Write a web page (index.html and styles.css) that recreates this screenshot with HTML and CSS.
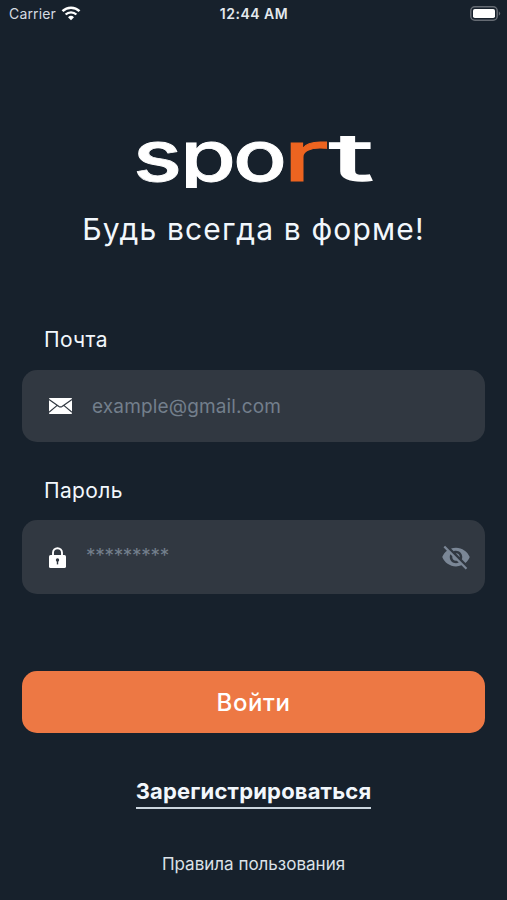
FILE: index.html
```html
<!DOCTYPE html>
<html lang="ru">
<head>
    <meta charset="UTF-8">
    <meta name="viewport" content="width=device-width, initial-scale=1.0">
    <title>Sport - Вход</title>
    <link rel="stylesheet" href="styles.css">
</head>
<body>
    <div class="screen">
        <div class="status-bar">
            <div class="carrier">
                <span>Carrier</span>
                <svg class="wifi" width="20" height="15" viewBox="0 0 20 15">
                    <path d="M1.5 5.2a12.2 12.2 0 0 1 17 0" fill="none" stroke="#fff" stroke-width="2.5"/>
                    <path d="M4.6 8.5a7.8 7.8 0 0 1 10.8 0" fill="none" stroke="#fff" stroke-width="2.4"/>
                    <path d="M10 14.3 7 11.3a4.3 4.3 0 0 1 6 0z" fill="#fff"/>
                </svg>
            </div>
            <span class="time">12:44 AM</span>
            <svg class="battery" width="31" height="15" viewBox="0 0 31 15">
                <rect x="0.8" y="0.8" width="26.4" height="13.4" rx="4" fill="none" stroke="#656b73" stroke-width="1.5"/>
                <rect x="3" y="3" width="22" height="9" rx="1.8" fill="#fff"/>
                <path d="M28.8 5.2q2.8 2.3 0 4.6z" fill="#656b73"/>
            </svg>
        </div>

        <svg class="logo" width="240" height="88" viewBox="0 -22 240 88">
            <text y="46.5"><tspan x="-1" textLength="49" lengthAdjust="spacingAndGlyphs">s</tspan><tspan x="46" textLength="56" lengthAdjust="spacingAndGlyphs">p</tspan><tspan x="99" textLength="54" lengthAdjust="spacingAndGlyphs">o</tspan><tspan class="accent" x="148" textLength="47" lengthAdjust="spacingAndGlyphs">r</tspan><tspan class="light" x="195" textLength="45" lengthAdjust="spacingAndGlyphs">t</tspan></text>
        </svg>
        <h1>Будь всегда в форме!</h1>

        <form class="login-form">
            <label for="email">Почта</label>
            <div class="field email-field">
                <svg width="23" height="16" viewBox="0 0 23 16">
                    <rect width="23" height="16" rx="0.8" fill="#fff"/>
                    <path d="M0 1.4 10 8.4q1.5 1 3 0L23 1.4M0 14.2l8.2-6.8M23 14.2l-8.2-6.8" fill="none" stroke="#313841" stroke-width="1.2"/>
                </svg>
                <input type="email" id="email" placeholder="example@gmail.com">
            </div>

            <label for="password">Пароль</label>
            <div class="field password-field">
                <svg width="17" height="21" viewBox="0 0 17 21">
                    <path d="M4 9V5.7a4.5 4.5 0 0 1 9 0V9" fill="none" stroke="#fff" stroke-width="1.9"/>
                    <rect y="8" width="17" height="13" rx="1.6" fill="#fff"/>
                    <circle cx="8.5" cy="13" r="1.7" fill="#313841"/>
                    <path d="M7.8 13h1.4v4.4H7.8z" fill="#313841"/>
                </svg>
                <input type="password" id="password" placeholder="*********">
                <svg class="eye" width="30" height="30" viewBox="0 0 24 24">
                    <path fill="#7b8796" d="M12 7c2.76 0 5 2.24 5 5 0 .65-.13 1.26-.36 1.83l2.92 2.92c1.51-1.26 2.7-2.89 3.43-4.75-1.73-4.39-6-7.5-11-7.5-1.4 0-2.74.25-3.98.7l2.16 2.16C10.74 7.13 11.35 7 12 7zM2 4.27l2.28 2.28.46.46C3.08 8.3 1.78 10.02 1 12c1.73 4.39 6 7.5 11 7.5 1.55 0 3.03-.3 4.38-.84l.42.42L19.73 22 21 20.73 3.27 3 2 4.27zM7.53 9.8l1.55 1.55c-.05.21-.08.43-.08.65 0 1.66 1.34 3 3 3 .22 0 .44-.03.65-.08l1.55 1.55c-.67.33-1.41.53-2.2.53-2.76 0-5-2.24-5-5 0-.79.2-1.53.53-2.2zm4.31-.78 3.15 3.15.02-.16c0-1.66-1.34-3-3-3l-.17.01z"/>
                </svg>
            </div>

            <button type="submit">Войти</button>
        </form>

        <a href="#" class="register">Зарегистрироваться</a>
        <a href="#" class="rules">Правила пользования</a>
    </div>
</body>
</html>
```
FILE: styles.css
```css
* {
    box-sizing: border-box;
}
body {
    margin: 0;
    background: #17212c;
    color: #f2f7fc;
    font-family: Inter, "Liberation Sans", sans-serif;
}
.screen {
    height: 900px;
    display: flex;
    flex-direction: column;
    align-items: center;
    overflow: hidden;
}
.status-bar {
    width: 100%;
    height: 26px;
    padding: 0 6px 0 9px;
    display: grid;
    grid-template-columns: 1fr auto 1fr;
    align-items: center;
    font-size: 14px;
}
.carrier {
    display: flex;
    align-items: center;
    gap: 5px;
    color: #d5dbe1;
    letter-spacing: 0.15px;
}
.time {
    margin-right: 2px;
    font-weight: 600;
    letter-spacing: 0.5px;
    color: #e4e9ee;
}
.battery {
    justify-self: end;
}
.logo {
    margin-top: 86px;
    margin-left: 1px;
    clip-path: inset(24px 0 12px 0);
}
.logo text {
    font-size: 70px;
    font-weight: 500;
    fill: #fff;
    stroke: #fff;
    stroke-width: 0.8px;
}
.logo .light {
    font-weight: 400;
    stroke-width: 1.4px;
}
.logo .accent {
    font-weight: 400;
    fill: #ed6420;
    stroke: #ed6420;
    stroke-width: 1px;
}
h1 {
    margin: 9px 0 0;
    font-size: 30px;
    line-height: 40px;
    font-weight: 400;
    letter-spacing: 1.15px;
    white-space: nowrap;
}
.login-form {
    width: 463px;
    margin-top: 76px;
    display: flex;
    flex-direction: column;
}
label {
    margin-left: 22px;
    font-size: 21px;
    line-height: 30px;
    letter-spacing: 0.35px;
}
.field {
    display: flex;
    align-items: center;
    margin-top: 15px;
    background: #313841;
    border-radius: 15px;
}
.email-field {
    height: 72px;
    padding: 0 26px 0 27px;
    gap: 20px;
    margin-bottom: 34px;
}
.password-field {
    height: 74px;
    margin-top: 14px;
    padding: 0 14px 0 27px;
    gap: 20px;
}
input {
    flex: 1;
    min-width: 0;
    padding: 0;
    border: none;
    outline: none;
    background: none;
    color: #fff;
    font-family: inherit;
    font-size: 19px;
    letter-spacing: 0.15px;
}
#password {
    padding-bottom: 4px;
    letter-spacing: -0.3px;
}
input::placeholder {
    color: #737f8c;
    opacity: 1;
}
button {
    height: 62px;
    margin-top: 77px;
    border: none;
    border-radius: 15px;
    background: #ed7844;
    color: #fff;
    font-family: inherit;
    font-size: 24px;
    font-weight: 500;
    letter-spacing: 0.6px;
    cursor: pointer;
}
.register {
    margin-top: 43px;
    border-bottom: 2px solid #cbd6df;
    color: inherit;
    font-size: 22px;
    line-height: 31px;
    font-weight: 700;
    letter-spacing: 0.18px;
    text-decoration: none;
}
.rules {
    margin-top: 43px;
    color: #dce2e8;
    font-size: 17px;
    line-height: 24px;
    text-decoration: none;
}
```
